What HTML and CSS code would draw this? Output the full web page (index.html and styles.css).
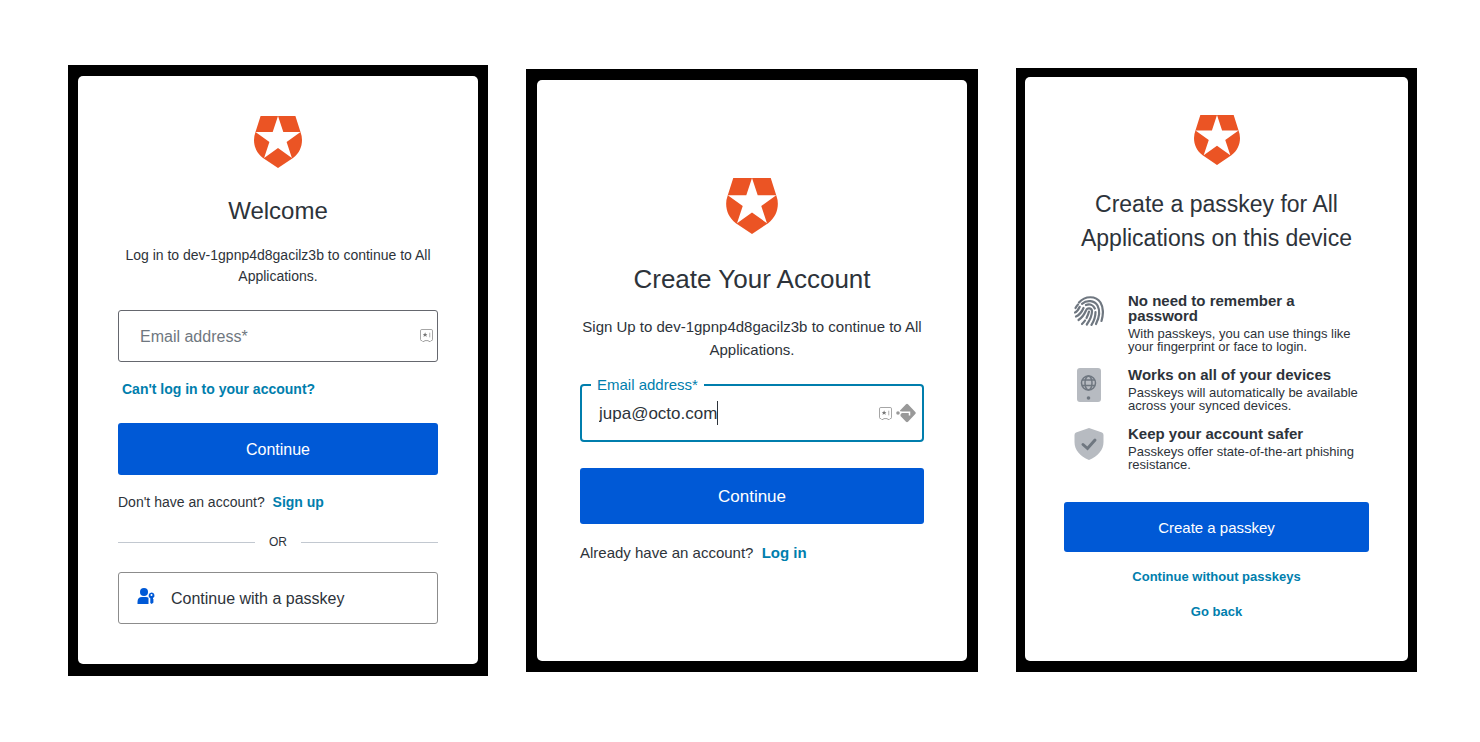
FILE: index.html
```
<!DOCTYPE html>
<html lang="en">
<head>
    <meta charset="UTF-8">
    <meta name="viewport" content="width=device-width, initial-scale=1.0">
    <title>Passkey sign up</title>
    <link rel="stylesheet" href="styles.css">
</head>
<body>
    <!-- shared shapes -->
    <svg class="sprite" aria-hidden="true">
        <symbol id="shield" viewBox="0 0 48 52">
            <path fill="#eb5424" d="M6.6 0H41.4L46.5 16Q48 20 48 24C48 31 45 37.5 39 42L24 52 9 42C3 37.5 0 31 0 24Q0 20 1.500 16Z"/>
            <path fill="#fff" d="M24 0 29.300 16H46.500L32.600 26 37.900 42 24 32 10.100 42 15.400 26 1.500 16H18.700Z"/>
        </symbol>
        <symbol id="vault" viewBox="0 0 14 14">
            <path fill="none" stroke="#9b9b9b" d="M2 .5H12Q13.500 .5 13.500 2V11.500Q13.500 12.500 12 12.500L11 13.500H9.500L9 12.500H5L4.500 13.500H3L2 12.500Q.5 12.500 .5 11.500V2Q.5 .5 2 .5Z"/>
            <path fill="#777" d="M5.500 3.500 6.200 5.300H8L6.700 6.500 7.200 8.500 5.500 7.400 3.800 8.500 4.300 6.500 3 5.300H4.800Z"/>
            <path stroke="#aaa" d="M10.500 4V9"/>
        </symbol>
    </svg>

    <main class="screens">
        <section class="frame frame-login">
            <form class="card">
                <svg class="logo" role="img" aria-label="Auth0"><use href="#shield"/></svg>
                <h1>Welcome</h1>
                <p class="intro">Log in to dev-1gpnp4d8gacilz3b to continue to All Applications.</p>
                <div class="field">
                    <label for="login-email">Email address*</label>
                    <input type="text" id="login-email">
                    <svg class="vault" aria-hidden="true"><use href="#vault"/></svg>
                </div>
                <a href="#" class="help-link">Can't log in to your account?</a>
                <button type="submit" class="primary">Continue</button>
                <p class="switch">Don't have an account? <a href="#">Sign up</a></p>
                <div class="divider">OR</div>
                <button type="button" class="secondary">
                    <svg class="user-key" viewBox="0 0 18 17" fill="#0059d6" aria-hidden="true">
                        <circle cx="7" cy="4" r="4"/>
                        <path d="M.5 16V14Q.5 9 5 9H9Q10.500 9 11.500 9.800V16Z"/>
                        <path fill-rule="evenodd" d="M14.500 4.500A3 3 0 0 1 16 10.100V11L16.800 12 16 13 16.800 14 14.800 16 13.300 15V10.200A3 3 0 0 1 14.500 4.500ZM14.500 6A1 1 0 1 0 14.500 8A1 1 0 1 0 14.500 6Z"/>
                    </svg>
                    Continue with a passkey
                </button>
            </form>
        </section>

        <section class="frame frame-signup">
            <form class="card">
                <svg class="logo" role="img" aria-label="Auth0"><use href="#shield"/></svg>
                <h1>Create Your Account</h1>
                <p class="intro">Sign Up to dev-1gpnp4d8gacilz3b to continue to All Applications.</p>
                <div class="field active">
                    <label for="signup-email">Email address*</label>
                    <input type="text" id="signup-email" value="jupa@octo.com">
                    <span class="caret"></span>
                    <svg class="vault" aria-hidden="true"><use href="#vault"/></svg>
                    <svg class="relay" viewBox="0 0 20 20" aria-hidden="true">
                        <circle cx="2" cy="10" r="1.800" fill="#999"/>
                        <path fill="#999" d="M10 1.200Q11 .3 12 1.200L19.300 9Q20.200 10 19.300 11L12 18.800Q11 19.700 10 18.800L4.500 13V11.500L5.500 10.500V8.500H4V7.500Z"/>
                        <path fill="none" stroke="#fff" stroke-width="1.500" d="M4 9.300H13.500V12.500"/>
                    </svg>
                </div>
                <button type="submit" class="primary">Continue</button>
                <p class="switch">Already have an account? <a href="#">Log in</a></p>
            </form>
        </section>

        <section class="frame frame-passkey">
            <div class="card">
                <svg class="logo" role="img" aria-label="Auth0"><use href="#shield"/></svg>
                <h1>Create a passkey for All Applications on this device</h1>
                <ul class="features">
                    <li>
                        <svg viewBox="0 0 30 30" fill="none" stroke="#6f7780" stroke-width="2.200" stroke-linecap="round" aria-hidden="true">
                            <path d="M5 6.500C11 -.5 22 -.5 26.500 6.500C29.500 11.500 29.500 18 27.500 25"/>
                            <path d="M1.500 12C2.300 10.500 3 9.500 4 8.500M8 7.800C13 3.500 20.500 4.500 23.500 9.500C26.500 15 25 22 22 28"/>
                            <path d="M1 16.500C3.500 15.500 4.500 13.500 5.700 10.800M12 9C16 7.500 19.500 9.300 20.800 12.500M21.500 16C21.500 20.500 20 25 17.500 28.800"/>
                            <path d="M2 20.500C6.500 18.500 8 15.500 9.500 12M4.500 24C9 21 10.500 18 12 14.500C13 11.500 17.500 11.500 18 15C18 19 16 24 12.800 28.500"/>
                            <path d="M15 15.500C14.500 18 13.500 20 12.500 22M11 24.500C10 26 9 27 8 28"/>
                        </svg>
                        <div>
                            <h2>No need to remember a password</h2>
                            <p>With passkeys, you can use things like your fingerprint or face to login.</p>
                        </div>
                    </li>
                    <li>
                        <svg viewBox="0 0 30 36" fill="none" stroke="#6f7780" aria-hidden="true">
                            <rect x="3" y="1" width="24" height="34" rx="3" fill="#b7bbc1" stroke="none"/>
                            <circle cx="14.500" cy="16" r="7" stroke-width="1.500"/>
                            <ellipse cx="14.500" cy="16" rx="3.500" ry="7" stroke-width="1.500"/>
                            <path stroke-width="1.500" d="M8 13H21M8 18.500H21"/>
                            <circle cx="14.500" cy="31" r="1.800" fill="#6f7780" stroke="none"/>
                        </svg>
                        <div>
                            <h2>Works on all of your devices</h2>
                            <p>Passkeys will automatically be available across your synced devices.</p>
                        </div>
                    </li>
                    <li>
                        <svg viewBox="0 0 30 32" aria-hidden="true">
                            <path fill="#b7bbc1" d="M15 0 28 4.500Q29.500 5 29.500 7V14C29.500 22 24 28 15 32C6 28 .5 22 .5 14V7Q.5 5 2 4.500Z"/>
                            <path fill="none" stroke="#6f7780" stroke-width="3" stroke-linecap="round" d="M9 16.500 13.500 20.500 21 12"/>
                        </svg>
                        <div>
                            <h2>Keep your account safer</h2>
                            <p>Passkeys offer state-of-the-art phishing resistance.</p>
                        </div>
                    </li>
                </ul>
                <button type="button" class="primary">Create a passkey</button>
                <a href="#" class="text-link">Continue without passkeys</a>
                <a href="#" class="text-link">Go back</a>
            </div>
        </section>
    </main>
</body>
</html>
```
FILE: styles.css
```
:root {
    --primary-color: #0059d6;
    --link-color: #007ead;
    --text-color: #2d333a;
    --border-color: #6f7780;
}

* {
    box-sizing: border-box;
}

body {
    margin: 0;
    background: #fff;
    color: var(--text-color);
    font-family: "Liberation Sans", Arial, sans-serif;
    font-size: 14px;
    line-height: 21px;
}

h1, h2, p, ul {
    margin: 0;
    padding: 0;
    font-weight: 400;
}

a {
    color: var(--link-color);
    font-weight: 700;
    text-decoration: none;
}

a:hover {
    text-decoration: underline;
}

.sprite {
    display: none;
}

.screens {
    min-height: 100vh;
    padding: 32px 63px 34px 68px;
    display: grid;
    grid-template-columns: 420fr 452fr 401fr;
    gap: 38px;
    align-items: center;
}

.frame {
    background: #000;
    padding: 11px 10px 12px;
}

.card {
    background: #fff;
    border-radius: 5px;
    padding: 40px;
    display: flex;
    flex-direction: column;
}

.logo {
    width: 48px;
    height: 52px;
    align-self: center;
}

h1 {
    margin-top: 25px;
    font-size: 24px;
    line-height: 36px;
    text-align: center;
}

.intro {
    margin-top: 16px;
    text-align: center;
}

/* Text fields */
.field {
    position: relative;
    display: flex;
    align-items: center;
    height: 52px;
    margin-top: 23px;
    padding: 0 4px 0 20px;
    border: 1px solid #65676e;
    border-radius: 3px;
}

.field label {
    position: absolute;
    left: 21px;
    padding-top: 2px;
    color: var(--border-color);
    font-size: 16px;
    pointer-events: none;
}

.field input {
    flex: 1;
    min-width: 0;
    padding: 0;
    border: 0;
    outline: 0;
    background: transparent;
    color: var(--text-color);
    font: inherit;
    font-size: 17px;
}

.field.active {
    height: 58px;
    padding: 0 6px 0 17px;
    border: 2px solid var(--link-color);
    border-radius: 4px;
}

.field.active label {
    top: -12px;
    left: 9px;
    padding: 0 6px;
    background: #fff;
    color: var(--link-color);
    font-size: 15px;
}

.field.active input {
    flex: none;
    field-sizing: content;
}

.caret {
    width: 1px;
    height: 24px;
    background: var(--text-color);
}

.vault {
    width: 13px;
    height: 13px;
    margin-left: auto;
}

.relay {
    width: 20px;
    height: 20px;
    margin-left: 4px;
}

/* Buttons */
.primary,
.secondary {
    height: 52px;
    border-radius: 3px;
    font-family: inherit;
    font-size: 16px;
    cursor: pointer;
}

.primary {
    padding: 2px 0 0;
    border: 0;
    background: var(--primary-color);
    color: #fff;
}

.secondary {
    display: flex;
    align-items: center;
    gap: 16px;
    padding: 2px 18px 0;
    border: 1px solid #8c8c8c;
    background: #fff;
    color: var(--text-color);
}

.user-key {
    width: 18px;
    height: 17px;
    margin-bottom: 4px;
}

.help-link {
    align-self: flex-start;
    margin: 17px 4px 23px;
}

.switch {
    margin-top: 17px;
}

.switch a {
    margin-left: 4px;
}

.divider {
    display: flex;
    align-items: center;
    gap: 14px;
    margin: 19px 0;
    font-size: 12px;
}

.divider::before,
.divider::after {
    content: "";
    flex: 1;
    height: 1px;
    background: #c2c8d0;
}

/* Sign up */
.frame-signup {
    padding: 11px;
}

.frame-signup .card {
    min-height: 581px;
    padding: 42px 43px 40px;
    justify-content: center;
}

.frame-signup .logo {
    width: 52px;
    height: 56px;
}

.frame-signup h1 {
    margin-top: 26px;
    font-size: 26px;
    line-height: 39px;
}

.frame-signup .intro,
.frame-signup .switch {
    font-size: 15px;
    line-height: 23px;
}

.frame-signup .primary {
    height: 56px;
    margin-top: 26px;
    font-size: 17px;
}

/* Passkey */
.frame-passkey {
    padding: 9px 9px 11px;
}

.frame-passkey .card {
    min-height: 584px;
    padding: 38px 39px;
}

.frame-passkey .logo {
    width: 46px;
    height: 50px;
}

.frame-passkey h1 {
    margin-top: 22px;
    font-size: 23px;
    line-height: 34px;
}

.features {
    display: grid;
    gap: 14px;
    margin: 38px 0 31px;
    list-style: none;
}

.features li {
    display: flex;
    gap: 24px;
    padding: 0 4px 0 10px;
}

.features svg {
    flex: none;
    width: 30px;
    height: 36px;
}

.features h2 {
    font-size: 15px;
    font-weight: 700;
    line-height: 15px;
}

.features p {
    margin-top: 4px;
    font-size: 13px;
    line-height: 13px;
}

.frame-passkey .primary {
    height: 50px;
    padding: 0;
    font-size: 15px;
}

.text-link {
    align-self: center;
    margin-top: 15px;
    font-size: 13px;
    line-height: 20px;
}
```
